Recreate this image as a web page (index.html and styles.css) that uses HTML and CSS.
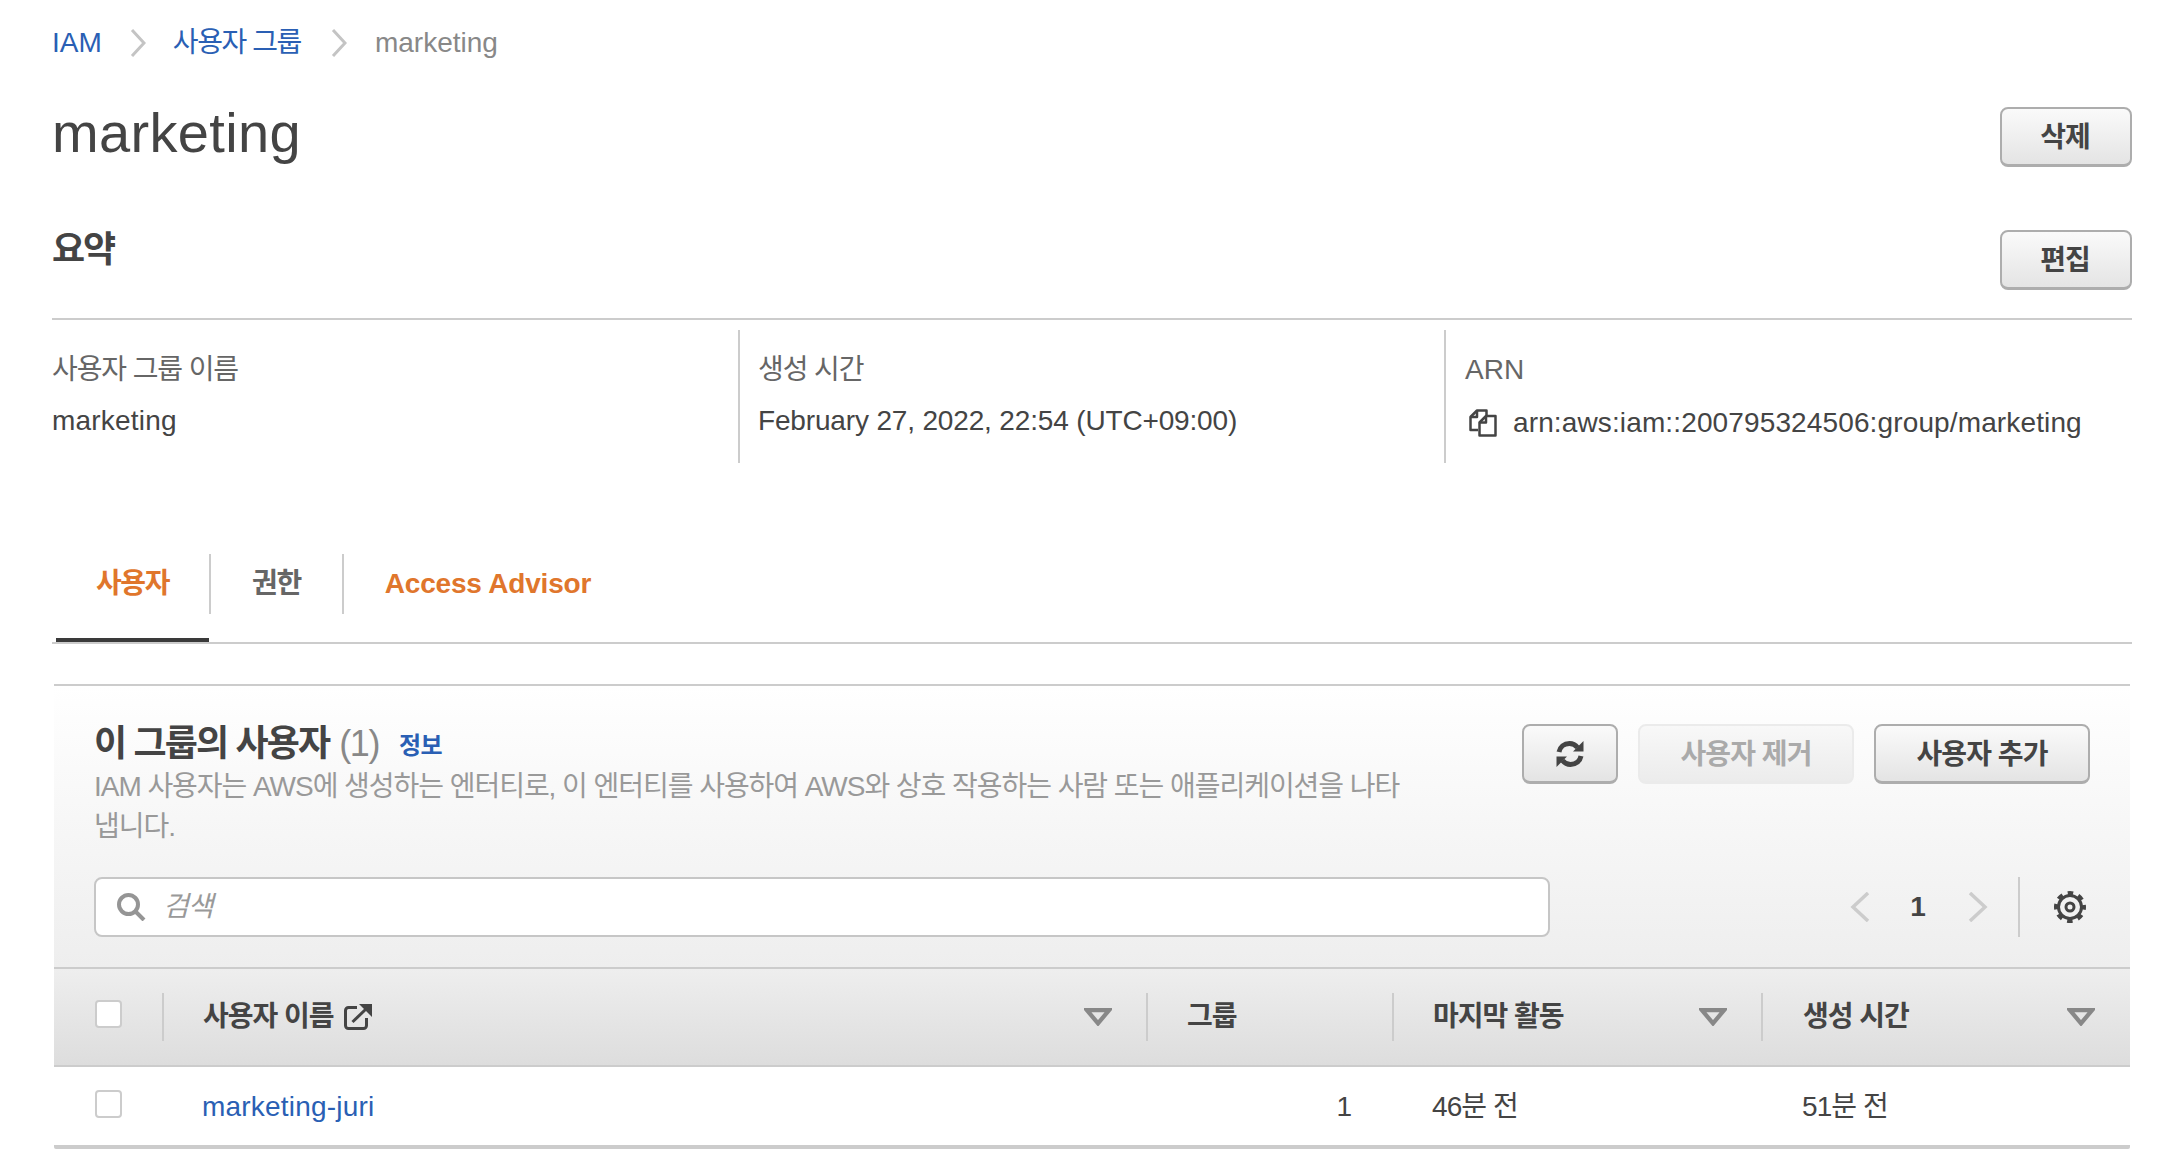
FILE: index.html
```html
<!DOCTYPE html>
<html lang="ko">
  <head>
    <meta charset="UTF-8">
    <title>marketing</title>
    <link rel="stylesheet" href="styles.css">
  </head>
  <body>
    <nav class="breadcrumb">
      <a href="#">IAM</a>
      <svg class="breadcrumb-sep" viewBox="0 0 16 28"><path d="M2 1l12 13L2 27"/></svg>
      <a class="breadcrumb-ko" href="#">사용자 그룹</a>
      <svg class="breadcrumb-sep" viewBox="0 0 16 28"><path d="M2 1l12 13L2 27"/></svg>
      <span>marketing</span>
    </nav>

    <header class="page-head">
      <h1>marketing</h1>
      <button class="btn btn--small">삭제</button>
    </header>

    <section class="summary">
      <div class="summary-head">
        <h2>요약</h2>
        <button class="btn btn--small">편집</button>
      </div>
      <div class="summary-cols">
        <div class="summary-col">
          <div class="summary-label">사용자 그룹 이름</div>
          <div class="summary-value summary-value--name">marketing</div>
        </div>
        <div class="summary-col">
          <div class="summary-label">생성 시간</div>
          <div class="summary-value summary-value--date">February 27, 2022, 22:54 (UTC+09:00)</div>
        </div>
        <div class="summary-col summary-col--arn">
          <div class="summary-label">ARN</div>
          <div class="summary-value">
            <svg class="copy-icon" viewBox="0 0 28 28">
              <path d="M9 21H1.500V8L8 1.500h9.500V6"/>
              <path d="M8 1.500V8H1.500"/>
              <path d="M10.500 26.500V13.500L17 7h9.500v19.500z"/>
              <path d="M17 7v6.500h-6.500"/>
            </svg>
            <span>arn:aws:iam::200795324506:group/marketing</span>
          </div>
        </div>
      </div>
    </section>

    <div class="tabs">
      <a class="tab tab--active" href="#">사용자</a>
      <a class="tab tab--plain" href="#">권한</a>
      <a class="tab tab--latin" href="#">Access Advisor</a>
    </div>

    <section class="panel">
      <div class="panel-head">
        <div class="panel-top">
          <div class="panel-intro">
            <div class="panel-title">
              <h3>이 그룹의 사용자</h3>
              <span class="panel-count">(1)</span>
              <a class="panel-info" href="#">정보</a>
            </div>
            <p>IAM 사용자는 AWS에 생성하는 엔터티로, 이 엔터티를 사용하여 AWS와 상호 작용하는 사람 또는 애플리케이션을 나타냅니다.</p>
          </div>
          <div class="panel-actions">
            <button class="btn btn--icon">
              <svg viewBox="0 0 28 28" class="refresh-icon">
                <path class="refresh-arc" d="M3 12C4 7 8 3.500 13.500 3.500c3.500 0 6 1.500 8 4"/>
                <path class="refresh-head" d="M27.500 1v10.500H17z"/>
                <path class="refresh-arc" d="M25 16c-1 5-5 8.500-10.500 8.500-3.500 0-6-1.500-8-4"/>
                <path class="refresh-head" d="M.5 27V16.500H11z"/>
              </svg>
            </button>
            <button class="btn btn--wide" disabled>사용자 제거</button>
            <button class="btn btn--wide">사용자 추가</button>
          </div>
        </div>
        <div class="panel-tools">
          <label class="search">
            <svg class="search-icon" viewBox="0 0 29 28">
              <circle cx="11.500" cy="11.500" r="9.500"/>
              <path d="M18.500 18.500l8.500 8.500"/>
            </svg>
            <input type="text" placeholder="검색">
          </label>
          <div class="pager">
            <svg class="pager-arrow" viewBox="0 0 20 30"><path d="M18 1L3 15l15 14"/></svg>
            <span class="pager-num">1</span>
            <svg class="pager-arrow" viewBox="0 0 20 30"><path d="M2 1l15 14L2 29"/></svg>
            <span class="pager-line"></span>
            <svg class="gear-icon" viewBox="0 0 32 32">
              <circle class="gear-teeth" cx="16" cy="16" r="14"/>
              <circle cx="16" cy="16" r="11.500"/>
              <circle cx="16" cy="16" r="4"/>
            </svg>
          </div>
        </div>
      </div>

      <div class="table-row table-row--head">
        <div class="cell cell--check"><span class="checkbox checkbox--filled"></span></div>
        <div class="cell cell--head">
          <span class="cell-name">사용자 이름
            <svg class="ext-icon" viewBox="0 0 28 26">
              <path d="M13 3.500H4.500a3 3 0 0 0-3 3v15a3 3 0 0 0 3 3h15a3 3 0 0 0 3-3V14"/>
              <path d="M8.500 18L22 5"/>
              <path class="ext-head" d="M15 0h13v13z"/>
            </svg>
          </span>
          <svg class="sort-icon" viewBox="0 0 26 17"><path d="M2.500 2h21L13 14.500z"/></svg>
        </div>
        <div class="cell cell--head"><span class="cell-name">그룹</span></div>
        <div class="cell cell--head">
          <span class="cell-name">마지막 활동</span>
          <svg class="sort-icon" viewBox="0 0 26 17"><path d="M2.500 2h21L13 14.500z"/></svg>
        </div>
        <div class="cell cell--head cell--last">
          <span class="cell-name">생성 시간</span>
          <svg class="sort-icon" viewBox="0 0 26 17"><path d="M2.500 2h21L13 14.500z"/></svg>
        </div>
      </div>

      <div class="table-row table-row--body">
        <div class="cell cell--check"><span class="checkbox"></span></div>
        <div class="cell cell--link"><a href="#">marketing-juri</a></div>
        <div class="cell cell--num">1</div>
        <div class="cell cell--ko">46분 전</div>
        <div class="cell cell--ko cell--last">51분 전</div>
      </div>
    </section>
  </body>
</html>
```

FILE: styles.css
```css
:root {
  font-family: "Liberation Sans", "Noto Sans CJK KR", sans-serif;
  font-size: 28px;
  line-height: 40px;
  color: #444;
  background-color: #fff;
}

* {
  box-sizing: border-box;
}

body {
  margin: 0;
  padding: 23px 48px 20px 52px;
}

a {
  color: #2a5fb4;
  text-decoration: none;
}

h1, h2, h3, p {
  margin: 0;
}

svg {
  display: block;
  flex: none;
  fill: none;
}

/* breadcrumb */

.breadcrumb {
  display: flex;
  align-items: center;
  height: 40px;
}

.breadcrumb span {
  color: #888;
}

.breadcrumb-ko {
  margin-right: 2px;
  letter-spacing: -1.400px;
}

.breadcrumb-sep {
  width: 16px;
  height: 28px;
  margin: 0 28px;
  stroke: #c4c4c4;
  stroke-width: 3;
}

.breadcrumb-sep:first-of-type {
  margin-right: 27px;
}

/* buttons */

.btn {
  display: flex;
  align-items: center;
  justify-content: center;
  height: 60px;
  padding: 2px 0 0;
  font: bold 28px/40px "Liberation Sans", "Noto Sans CJK KR", sans-serif;
  letter-spacing: -0.900px;
  color: #444;
  background: linear-gradient(#fafafa, #e4e4e4);
  border: 2px solid #adadad;
  border-bottom-width: 3px;
  border-radius: 8px;
}

.btn:disabled {
  color: #aaa;
  background: linear-gradient(#f8f8f8, #ececec);
  border-color: #ebebeb;
}

.btn--small {
  width: 132px;
  padding-right: 2px;
}

.btn--icon {
  width: 96px;
  padding-top: 0;
}

.btn--wide {
  width: 216px;
}

/* page head and summary */

.page-head {
  display: flex;
  align-items: flex-start;
  justify-content: space-between;
  margin-top: 44px;
}

.page-head h1 {
  font-size: 56px;
  font-weight: 400;
  line-height: 52px;
  letter-spacing: 0.350px;
}

.summary {
  margin-top: 63px;
}

.summary-head {
  display: flex;
  align-items: flex-start;
  justify-content: space-between;
  padding-bottom: 28px;
  border-bottom: 2px solid #ccc;
}

.summary-head h2 {
  font-size: 36px;
  line-height: 40px;
  letter-spacing: -2px;
}

.summary-cols {
  display: grid;
  grid-template-columns: 686px 706px 688px;
  height: 133px;
  margin-top: 10px;
}

.summary-col {
  padding: 20px 0 0 18px;
  border-left: 2px solid #ccc;
}

.summary-col:first-child {
  padding-left: 0;
  border-left: 0;
}

.summary-col--arn {
  padding-left: 19px;
}

.summary-label {
  color: #666;
  letter-spacing: -1.100px;
}

.summary-col--arn .summary-label {
  letter-spacing: 0;
}

.summary-value {
  display: flex;
  align-items: center;
  margin-top: 11px;
}

.summary-value--name {
  letter-spacing: 0.200px;
}

.summary-value--date {
  letter-spacing: -0.160px;
}

.summary-col--arn .summary-value {
  margin-top: 13px;
  padding-left: 4px;
  letter-spacing: 0.130px;
}

.copy-icon {
  width: 28px;
  height: 28px;
  margin-right: 16px;
  stroke: #444;
  stroke-width: 2.500;
  stroke-linejoin: round;
}

/* tabs */

.tabs {
  display: flex;
  margin-top: 91px;
  padding: 0 0 28px 4px;
  border-bottom: 2px solid #ccc;
}

.tab {
  position: relative;
  height: 60px;
  padding: 9px 41px 0 41px;
  font-weight: bold;
  line-height: 42px;
  letter-spacing: -1.400px;
  color: #e0762c;
  border-right: 2px solid #ccc;
}

.tab:first-child {
  padding: 9px 40px 0 40px;
}

.tab:last-child {
  border-right: 0;
}

.tab--plain {
  color: #666;
}

.tab--latin {
  letter-spacing: -0.200px;
}

.tab--active::after {
  content: "";
  position: absolute;
  left: 0;
  right: 0;
  bottom: -28px;
  height: 4px;
  background: #3a3a3a;
}

/* panel */

.panel {
  margin: 40px 2px 0;
  border-top: 2px solid #ccc;
}

.panel-head {
  padding: 38px 40px 30px;
  background: linear-gradient(#fff, #eee);
  border-bottom: 2px solid #ccc;
}

.panel-top {
  display: flex;
  justify-content: space-between;
}

.panel-intro {
  width: 1325px;
}

.panel-intro p {
  margin-top: 3px;
  letter-spacing: -1.040px;
  color: #999;
}

.panel-title {
  display: flex;
  align-items: center;
  height: 40px;
}

.panel-title h3 {
  font-size: 36px;
  letter-spacing: -1.850px;
}

.panel-count {
  margin-left: 10px;
  font-size: 36px;
  letter-spacing: -1.400px;
  color: #888;
}

.panel-info {
  margin: 4px 0 0 20px;
  font-size: 24px;
  font-weight: bold;
  letter-spacing: -0.500px;
}

.panel-actions {
  display: flex;
  gap: 20px;
}

.refresh-icon {
  width: 28px;
  height: 28px;
}

.refresh-arc {
  stroke: #444;
  stroke-width: 5;
}

.refresh-head {
  fill: #444;
}

.panel-tools {
  display: flex;
  align-items: center;
  justify-content: space-between;
  margin-top: 30px;
}

.search {
  display: flex;
  align-items: center;
  width: 1456px;
  height: 60px;
  padding-left: 21px;
  background: #fff;
  border: 2px solid #c6c6c6;
  border-radius: 8px;
}

.search-icon {
  width: 29px;
  height: 28px;
  stroke: #959595;
  stroke-width: 4;
}

.search input {
  flex: 1;
  min-width: 0;
  margin-left: 17px;
  padding: 0;
  font: italic 28px "Liberation Sans", "Noto Sans CJK KR", sans-serif;
  letter-spacing: -1px;
  color: #444;
  background: transparent;
  border: 0;
  outline: 0;
}

.search input::placeholder {
  color: #999;
  opacity: 1;
}

.pager {
  display: flex;
  align-items: center;
  padding-right: 4px;
}

.pager-arrow {
  width: 20px;
  height: 30px;
  stroke: #ccc;
  stroke-width: 3.500;
}

.pager-num {
  width: 16px;
  margin: 0 42px 0 40px;
  font-weight: bold;
  text-align: center;
}

.pager-line {
  width: 2px;
  height: 60px;
  margin: 0 34px 0 30px;
  background: #ccc;
}

.gear-icon {
  width: 32px;
  height: 32px;
  stroke: #444;
  stroke-width: 3;
}

.gear-teeth {
  stroke-width: 4;
  stroke-dasharray: 5.500 5.500;
  stroke-dashoffset: 2.750;
}

/* table */

.table-row {
  display: grid;
  grid-template-columns: 108px 984px 246px 369px 369px;
  align-items: center;
}

.table-row--head {
  height: 98px;
  background: linear-gradient(#eee, #ddd);
  border-bottom: 2px solid #ccc;
}

.table-row--body {
  height: 82px;
  border-bottom: 4px solid #ccc;
  border-radius: 0 0 2px 2px;
}

.cell {
  display: flex;
  align-items: center;
  padding-left: 40px;
}

.table-row--body .cell {
  padding-top: 1px;
}

.table-row--body .cell--check {
  padding-top: 0;
}

.cell--check {
  padding-left: 41px;
}

.cell--head {
  justify-content: space-between;
  height: 48px;
  padding: 0 34px 0 39px;
  font-weight: bold;
  letter-spacing: -1px;
  border-left: 2px solid #ccc;
}

.cell--head.cell--last {
  padding: 0 35px 0 40px;
}

.cell--link {
  letter-spacing: 0.200px;
}

.cell--num {
  justify-content: flex-end;
  padding-right: 40px;
}

.cell--ko {
  letter-spacing: -0.900px;
}

.cell--last {
  padding-left: 41px;
}

.cell-name {
  display: flex;
  align-items: center;
}

.checkbox {
  display: block;
  width: 27px;
  height: 28px;
  margin-bottom: 4px;
  border: 2px solid #ccc;
  border-radius: 4px;
}

.checkbox--filled {
  margin-bottom: 6px;
  background: #fff;
}

.ext-icon {
  width: 28px;
  height: 26px;
  margin-left: 10px;
  stroke: #444;
  stroke-width: 3;
}

.ext-head {
  fill: #444;
  stroke: none;
}

.sort-icon {
  width: 28px;
  height: 18px;
  stroke: #888;
  stroke-width: 4;
}
```
